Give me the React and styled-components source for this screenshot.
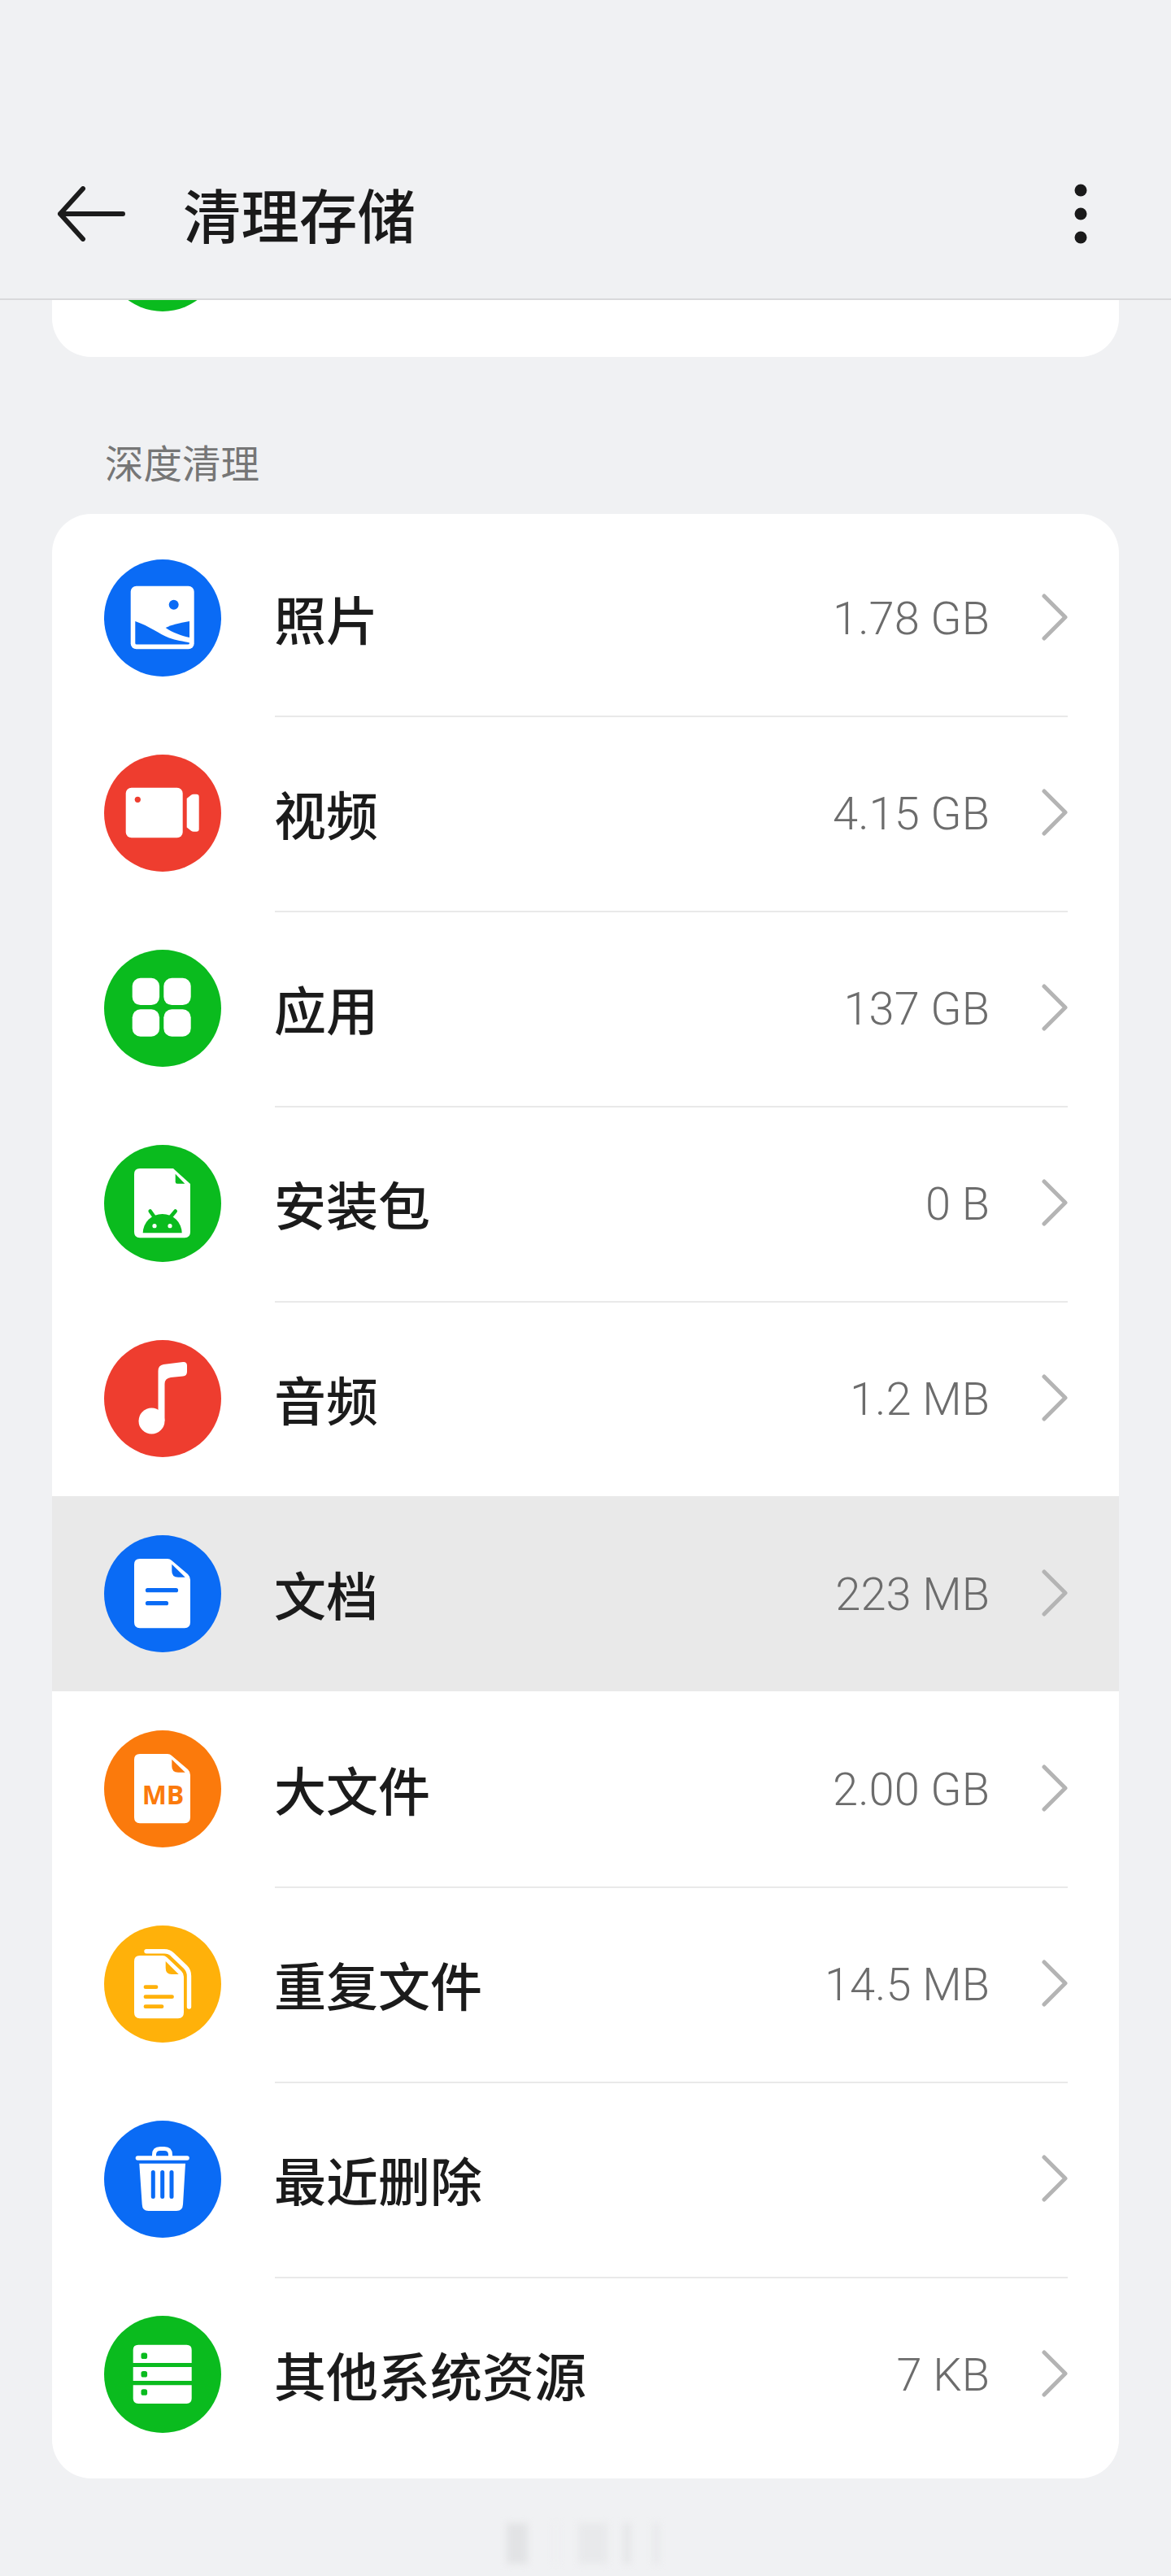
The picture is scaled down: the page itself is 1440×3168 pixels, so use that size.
import React from "react";
import styled, { createGlobalStyle } from "styled-components";

const CJK = `"Noto Sans CJK SC", "Noto Sans", sans-serif`;

const Global = createGlobalStyle`
  html, body { margin: 0; padding: 0; background: #f0f1f3; }
  * { box-sizing: border-box; }
`;

const Page = styled.div`
  position: relative;
  width: 1440px;
  height: 3168px;
  overflow: hidden;
  padding-top: 183px;
  background: #f0f1f3;
  font-family: ${CJK};
`;

const Header = styled.header`
  position: absolute;
  top: 0;
  left: 0;
  right: 0;
  z-index: 2;
  height: 369px;
  padding: 158px 103px 0 70px;
  display: flex;
  align-items: center;
  background: #f0f1f3;
  border-bottom: 2px solid #d9d9db;
`;

const Title = styled.h1`
  flex: 1;
  margin: 0 0 0 71px;
  font-size: 71.5px;
  font-weight: 500;
  line-height: 1;
  color: #1a1a1a;
  letter-spacing: 0;
`;

const Card = styled.section`
  margin: 0 64px;
  padding: 8px 0;
  background: #fff;
  border-radius: 48px;
  overflow: hidden;
`;

const SectionLabel = styled.h2`
  margin: 0;
  height: 193px;
  padding: 100px 0 0 129px;
  font-size: 47.5px;
  font-weight: 400;
  line-height: 1.2;
  color: #767676;
`;

const Row = styled.div`
  height: 240px;
  padding: 0 63px 0 64px;
  display: flex;
  align-items: center;
  gap: 66px;
  background: ${(p) => (p.$active ? "#e9e9e9" : "transparent")};
`;

const Badge = styled.div`
  flex: none;
  width: 144px;
  height: 144px;
  border-radius: 50%;
  background: ${(p) => p.$color};
  svg { display: block; }
`;

const RowBody = styled.div`
  flex: 1;
  align-self: flex-start;
  height: 242px;
  padding-bottom: 2px;
  display: flex;
  align-items: center;
  border-bottom: 2px solid ${(p) => (p.$plain ? "transparent" : "#e9e9e9")};
`;

const Label = styled.span`
  flex: 1;
  margin-left: -1px;
  font-size: 64px;
  font-weight: 500;
  line-height: 1;
  color: #1b1b1b;
`;

const Value = styled.span`
  padding-top: 4px;
  font-family: Roboto, "Noto Sans", sans-serif;
  font-size: 56px;
  font-weight: 300;
  line-height: 1;
  color: #6c6c6c;
`;

const Chevron = styled.svg`
  flex: none;
  margin-left: 64px;
  display: block;
`;

const Footer = styled.div`
  height: 120px;
  padding: 55px 0 0 623px;
  display: flex;
  align-items: flex-start;
  filter: blur(4px);
`;

const Smudge = styled.i`
  display: block;
  width: ${(p) => p.$w}px;
  height: 50px;
  margin-right: ${(p) => p.$gap}px;
  background: ${(p) => p.$c};
`;

const W = "#fff";

const Svg = ({ children }) => (
  <svg width="144" height="144" viewBox="0 0 144 144">{children}</svg>
);

const PhotoIcon = ({ c }) => (
  <Svg>
    <rect x="32.7" y="32.7" width="78" height="77.5" rx="7" fill={W} />
    <circle cx="85.7" cy="55.7" r="6" fill={c} />
    <path d="M38.3 76 C56 82 68 92 80 96.5 C88 99.8 98 100.5 105 102.5 V103 Q105 104.6 103 104.6 H40 Q38.3 104.6 38.3 103 Z" fill={c} />
    <path d="M75.7 84 C84 80 94 78 105 76 V96 C96 94 84 90 75.7 84 Z" fill={c} />
  </Svg>
);

const VideoIcon = ({ c }) => (
  <Svg>
    <rect x="26.7" y="40.7" width="70" height="61.6" rx="7" fill={W} />
    <circle cx="41.3" cy="55.3" r="3.6" fill={c} />
    <path d="M101.7 54 L107 49.7 Q108.4 48.7 110 48.7 H113.5 Q116.7 48.7 116.7 52 V91.5 Q116.7 94.7 113.5 94.7 H110 Q108.4 94.7 107 93.7 L101.7 89.5 Z" fill={W} />
  </Svg>
);

const AppsIcon = () => (
  <Svg>
    <rect x="34.7" y="34.7" width="33.4" height="33.4" rx="10" fill={W} />
    <rect x="73.3" y="34.7" width="33.4" height="33.4" rx="10" fill={W} />
    <rect x="34.7" y="73.3" width="33.4" height="33.4" rx="10" fill={W} />
    <rect x="73.3" y="73.3" width="33.4" height="33.4" rx="10" fill={W} />
  </Svg>
);

const ApkIcon = ({ c }) => (
  <Svg>
    <path d="M44 29 H85 L106 48 V107 Q106 114.3 99 114.3 H44 Q37 114.3 37 107 V36 Q37 29 44 29 Z" fill={W} />
    <path d="M87.7 35.7 L99.3 47.7 H90 Q87.7 47.7 87.7 45.4 Z" fill={c} />
    <path d="M47.7 108.3 A24 23.3 0 0 1 95.7 108.3 Z" fill={c} />
    <path d="M56.7 81.5 L62 89 M87.7 81.5 L81.4 89" stroke={c} strokeWidth="4.6" strokeLinecap="round" />
    <circle cx="62" cy="99.7" r="2.6" fill={W} />
    <circle cx="81" cy="99.7" r="2.6" fill={W} />
  </Svg>
);

const MusicIcon = () => (
  <Svg>
    <circle cx="58.5" cy="99.5" r="16" fill={W} />
    <path d="M66.5 99.5 V38 Q66.5 31 73 30 L97 27 Q102 26.5 102 31.5 V39 Q102 44 97 44.5 L82 46 Q74.5 47 74.5 54 V99.5 Z" fill={W} />
  </Svg>
);

const DocShape = ({ c }) => (
  <>
    <path d="M44 29 H78 Q81 29 83 31 L103 48 Q106 51 106 55 V107 Q106 114.3 99 114.3 H44 Q37 114.3 37 107 V36 Q37 29 44 29 Z" fill={W} />
    <path d="M83.3 35.7 L99.7 51.7 H91 Q83.3 51.7 83.3 44 Z" fill={c} />
  </>
);

const DocIcon = ({ c }) => (
  <Svg>
    <DocShape c={c} />
    <path d="M53.5 67.7 H88.5 M53.5 83.7 H76.5" stroke={c} strokeWidth="5.2" strokeLinecap="round" />
  </Svg>
);

const BigFileIcon = ({ c }) => (
  <Svg>
    <DocShape c={c} />
    <text x="72.5" y="90.8" textAnchor="middle" fontFamily='"Open Sans", sans-serif' fontWeight="700" fontSize="32" fill={c}>MB</text>
  </Svg>
);

const DupIcon = ({ c }) => (
  <Svg>
    <path d="M52 31.7 H74 Q80 31.7 84 35.7 L100 51 Q104.5 55.5 104.5 62 V100" fill="none" stroke={W} strokeWidth="5.4" strokeLinecap="round" />
    <path d="M44 37 H72 Q75 37 77 39 L95 56 Q98 59 98 63 V107 Q98 114.3 91 114.3 H44 Q37 114.3 37 107 V44 Q37 37 44 37 Z" fill={W} />
    <path d="M75.7 44 L91.7 60 H83 Q75.7 60 75.7 52 Z" fill={c} />
    <path d="M51 75.7 H64 M51 87.7 H83.5 M51 99.7 H71" stroke={c} strokeWidth="4.8" strokeLinecap="round" />
  </Svg>
);

const TrashIcon = ({ c }) => (
  <Svg>
    <path d="M41.5 46 H102" stroke={W} strokeWidth="5.6" strokeLinecap="round" />
    <path d="M61.5 44 V42 Q61.5 34.5 69 34.5 H74 Q81.5 34.5 81.5 42 V44" fill="none" stroke={W} strokeWidth="5" />
    <path d="M43.3 52.7 H100 L97 103 Q96.6 111 89 111 H54.5 Q47 111 46.7 103 Z" fill={W} />
    <path d="M60.3 63.5 V93.5 M71.7 63.5 V93.5 M83 63.5 V93.5" stroke={c} strokeWidth="5" strokeLinecap="round" />
  </Svg>
);

const ServerIcon = ({ c }) => (
  <Svg>
    <path d="M42 35.7 H101.5 Q107.7 35.7 107.7 42 V58 H35.7 V42 Q35.7 35.7 42 35.7 Z" fill={W} />
    <rect x="35.7" y="63" width="72" height="17" fill={W} />
    <path d="M35.7 85.3 H107.7 V101.5 Q107.7 108 101.5 108 H42 Q35.7 108 35.7 101.5 Z" fill={W} />
    <rect x="45.5" y="45.5" width="7.6" height="7.6" rx="2.6" fill={c} />
    <rect x="45.5" y="67.9" width="7.6" height="7.6" rx="2.6" fill={c} />
    <rect x="45.5" y="90.2" width="7.6" height="7.6" rx="2.6" fill={c} />
  </Svg>
);

const BLUE = "#0a6bf5";
const RED = "#ee3d2f";
const GREEN = "#0abb1e";
const ORANGE = "#fb7a0c";
const YELLOW = "#ffb10a";

const items = [
  { label: "照片", value: "1.78 GB", color: BLUE, Icon: PhotoIcon },
  { label: "视频", value: "4.15 GB", color: RED, Icon: VideoIcon },
  { label: "应用", value: "137 GB", color: GREEN, Icon: AppsIcon },
  { label: "安装包", value: "0 B", color: GREEN, Icon: ApkIcon },
  { label: "音频", value: "1.2 MB", color: RED, Icon: MusicIcon },
  { label: "文档", value: "223 MB", color: BLUE, Icon: DocIcon, active: true },
  { label: "大文件", value: "2.00 GB", color: ORANGE, Icon: BigFileIcon },
  { label: "重复文件", value: "14.5 MB", color: YELLOW, Icon: DupIcon },
  { label: "最近删除", value: "", color: BLUE, Icon: TrashIcon },
  { label: "其他系统资源", value: "7 KB", color: GREEN, Icon: ServerIcon },
];

const smudges = [
  { w: 26, gap: 32, c: "#e2e3e5" },
  { w: 6, gap: 24, c: "#eeeff1" },
  { w: 36, gap: 20, c: "#e8e9eb" },
  { w: 8, gap: 28, c: "#e4e5e7" },
  { w: 8, gap: 0, c: "#e8e9eb" },
];

export default function App() {
  return (
    <Page>
      <Global />
      <Header>
        <svg width="84" height="68" viewBox="0 0 84 68" fill="none" stroke="#1c1c1c" strokeWidth="6" strokeLinecap="round" strokeLinejoin="round">
          <path d="M32 3 L4 34 L32 65 M4 34 H81" />
        </svg>
        <Title>清理存储</Title>
        <svg width="16" height="74" viewBox="0 0 16 74" fill="#1a1a1a">
          <circle cx="8" cy="8" r="7.5" />
          <circle cx="8" cy="37" r="7.5" />
          <circle cx="8" cy="66" r="7.5" />
        </svg>
      </Header>

      <Card>
        <Row>
          <Badge $color={GREEN} />
        </Row>
      </Card>

      <SectionLabel>深度清理</SectionLabel>

      <Card>
        {items.map(({ label, value, color, Icon, active }, i) => (
          <Row key={label} $active={active}>
            <Badge $color={color}>
              <Icon c={color} />
            </Badge>
            <RowBody $plain={active || i === items.length - 1}>
              <Label>{label}</Label>
              <Value>{value}</Value>
              <Chevron width="32" height="58" viewBox="0 0 32 58" fill="none" stroke="#b4b4b4" strokeWidth="5" strokeLinecap="round" strokeLinejoin="round">
                <path d="M3 3 L29 29 L3 55" />
              </Chevron>
            </RowBody>
          </Row>
        ))}
      </Card>

      <Footer>
        {smudges.map((s, i) => (
          <Smudge key={i} $w={s.w} $gap={s.gap} $c={s.c} />
        ))}
      </Footer>
    </Page>
  );
}
